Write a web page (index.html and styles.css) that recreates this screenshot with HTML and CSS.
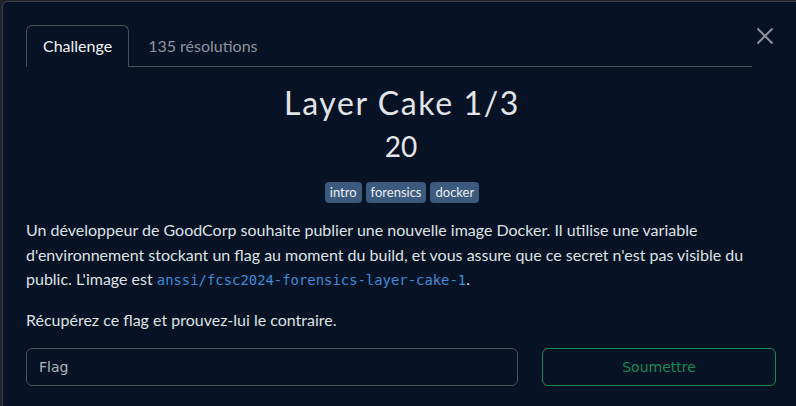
FILE: index.html
```html
<!DOCTYPE html>
<html lang="fr">
<head>
<meta charset="utf-8">
<title>Layer Cake 1/3</title>
<link rel="stylesheet" href="styles.css">
</head>
<body>
<div class="backdrop">
  <div class="modal">
    <div class="head">
      <div class="tabs">
        <div class="tab active">Challenge</div>
        <div class="tab">135 résolutions</div>
      </div>
      <button class="close" aria-label="Fermer">
        <svg width="18" height="18" viewBox="0 0 18 18"><path d="M1.5 1.5 L16.5 16.5 M16.5 1.5 L1.5 16.5" stroke="#8a9099" stroke-width="2" fill="none"/></svg>
      </button>
    </div>
    <h1 class="title">Layer Cake 1/3</h1>
    <div class="points">20</div>
    <div class="tags">
      <span class="tag">intro</span>
      <span class="tag">forensics</span>
      <span class="tag">docker</span>
    </div>
    <p class="desc">Un développeur de GoodCorp souhaite publier une nouvelle image Docker. Il utilise une variable d'environnement stockant un flag au moment du build, et vous assure que ce secret n'est pas visible du public. L'image est <code>anssi/fcsc2024-forensics-layer-cake-1</code>.</p>
    <p class="desc">Récupérez ce flag et prouvez-lui le contraire.</p>
    <form class="submit">
      <input class="flag" type="text" placeholder="Flag">
      <button class="go" type="button">Soumettre</button>
    </form>
  </div>
</div>
</body>
</html>
```
FILE: styles.css
```css
html, body {
  margin: 0;
  padding: 0;
  background: #202428;
  overflow: hidden;
}
.backdrop {
  padding: 1px 0 0 2px;
  height: 405px;
}
.modal {
  width: 830px;
  height: 440px;
  box-sizing: border-box;
  background: #071324;
  border: 1px solid #3a414a;
  border-radius: 6px;
  padding: 23px 0 0 23px;
  font-family: Lato, "Noto Sans", sans-serif;
  color: #dee2e6;
}
.head {
  display: flex;
  align-items: flex-start;
  width: 750px;
}
.tabs {
  display: flex;
  width: 726px;
  border-bottom: 1px solid #495057;
  height: 41px;
}
.tab {
  padding: 0 16px;
  height: 41px;
  line-height: 40px;
  font-size: 16px;
  color: #8b949e;
  box-sizing: border-box;
  border: 1px solid transparent;
  border-bottom: none;
  margin-right: 2px;
}
.tab.active {
  color: #f0f2f4;
  border-color: #495057;
  border-radius: 6px 6px 0 0;
  background: #071324;
  height: 42px;
}
.close {
  margin-left: 4px;
  margin-top: 2px;
  background: none;
  border: none;
  padding: 0;
  width: 18px;
  height: 18px;
  display: flex;
}
.title {
  margin: 17px 0 0 0;
  width: 752px;
  text-align: center;
  font-weight: 400;
  font-size: 32px;
  letter-spacing: 1.6px;
  line-height: 38px;
  color: #e1e5e9;
}
.points {
  width: 750px;
  text-align: center;
  font-size: 28px;
  line-height: 36px;
  margin-top: 6px;
  color: #e4e7ea;
}
.tags {
  width: 752px;
  display: flex;
  justify-content: center;
  gap: 4px;
  margin-top: 18px;
}
.tag {
  display: block;
  background: #3b5a7e;
  color: #e8edf3;
  font-size: 13px;
  line-height: 17px;
  padding: 2px 5px;
  border-radius: 4px;
}
.desc {
  width: 752px;
  font-size: 16px;
  line-height: 24.5px;
  margin: 15px 0 0 0;
  color: #dde1e5;
}
.desc + .desc {
  margin-top: 16px;
}
code {
  font-family: "DejaVu Sans Mono", monospace;
  font-size: 13.9px;
  line-height: 1;
  color: #3d8bd9;
}
.submit {
  display: flex;
  gap: 24px;
  margin-top: 16px;
  width: 750px;
}
.flag {
  width: 492px;
  height: 38px;
  box-sizing: border-box;
  background: #071324;
  border: 1px solid #4b525a;
  border-radius: 6px;
  padding: 0 12px;
  font-family: "DejaVu Sans", sans-serif;
  font-size: 14px;
  color: #dee2e6;
}
.flag::placeholder {
  color: #adb5bd;
}
.go {
  width: 234px;
  height: 38px;
  box-sizing: border-box;
  background: transparent;
  border: 1px solid #198754;
  border-radius: 6px;
  color: #198754;
  font-family: "DejaVu Sans", sans-serif;
  font-size: 14px;
}
```
